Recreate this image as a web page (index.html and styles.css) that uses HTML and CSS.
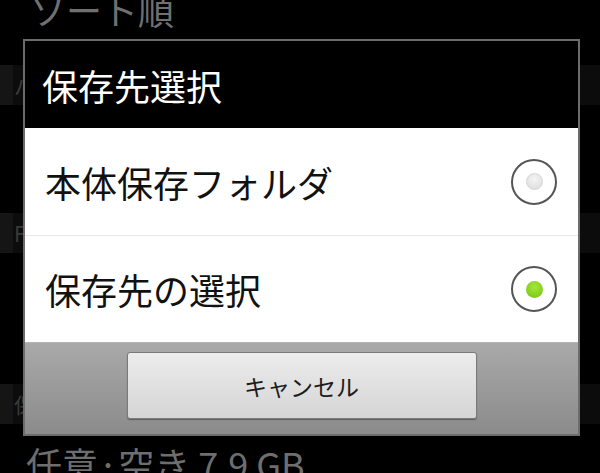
FILE: index.html
```html
<!DOCTYPE html>
<html lang="ja">
<head>
<meta charset="utf-8">
<title>保存先選択</title>
<link rel="stylesheet" href="styles.css">
</head>
<body>
<div class="screen">
  <div class="settings">
    <div class="setting-title">ソート順</div>
    <div class="band">パフォーマンス・スクロール</div>
    <div class="hidden-item item-a"></div>
    <div class="band">FTP設定</div>
    <div class="hidden-item item-b"></div>
    <div class="band">保存先</div>
    <div class="setting-value">任意·空き 7.9 GB</div>
  </div>

  <div class="dialog">
    <div class="dialog-title">保存先選択</div>
    <div class="options">
      <div class="option">
        <span class="option-label">本体保存フォルダ</span>
        <span class="radio"><span class="dot"></span></span>
      </div>
      <div class="option">
        <span class="option-label">保存先の選択</span>
        <span class="radio checked"><span class="dot"></span></span>
      </div>
    </div>
    <div class="button-bar">
      <button class="cancel">キャンセル</button>
    </div>
  </div>
</div>
</body>
</html>
```
FILE: styles.css
```css
html, body {
  margin: 0;
  padding: 0;
  background: #000;
}

body {
  font-family: "Noto Sans CJK JP", "Noto Sans", sans-serif;
}

.screen {
  position: relative;
  width: 600px;
  height: 473px;
  overflow: hidden;
  background: #000;
}

.settings {
  display: flex;
  flex-direction: column;
}

.setting-title {
  margin-top: -9px;
  height: 36px;
  line-height: 36px;
  font-size: 36px;
  color: #707070;
  padding-left: 30px;
  white-space: nowrap;
}

.band {
  margin-top: 38px;
  height: 40px;
  line-height: 40px;
  font-size: 21px;
  color: #3a3a3a;
  background: #0c0c0c;
  border-left: 13px solid #151515;
  padding-left: 1px;
  white-space: nowrap;
}

.hidden-item + .band {
  margin-top: 0;
}

.item-a { height: 108px; }
.item-b { height: 131px; }

.setting-value {
  margin-top: 21px;
  height: 36px;
  line-height: 36px;
  font-size: 36px;
  color: #6e6e6e;
  padding-left: 26px;
  white-space: nowrap;
}

.dialog {
  position: absolute;
  left: 23px;
  top: 39px;
  width: 553px;
  border: 2px solid #6c6c6c;
  display: flex;
  flex-direction: column;
  background: #000;
}

.dialog-title {
  height: 87px;
  display: flex;
  align-items: center;
  padding-left: 17px;
  font-size: 36px;
  color: #fff;
  background: #000;
}

.options {
  background: #fff;
  display: flex;
  flex-direction: column;
}

.option {
  display: flex;
  align-items: center;
  justify-content: space-between;
  height: 107px;
  padding: 0 21px 0 20px;
}

.option + .option {
  height: 106px;
  border-top: 1px solid #e8e8e8;
}

.option-label {
  font-size: 36px;
  color: #111;
  white-space: nowrap;
}

.radio {
  width: 42px;
  height: 42px;
  border: 2px solid #555;
  border-radius: 50%;
  display: flex;
  align-items: center;
  justify-content: center;
  background: #fff;
}

.dot {
  width: 15px;
  height: 15px;
  border-radius: 50%;
  background: radial-gradient(circle at 50% 35%, #f4f4f4 0%, #e2e2e2 70%, #d2d2d2 100%);
  border: 1px solid #d6d6d6;
}

.radio.checked .dot {
  width: 17px;
  height: 17px;
  border: none;
  background: radial-gradient(circle at 50% 35%, #a6e53c 0%, #86d21e 60%, #6fb912 100%);
}

.button-bar {
  height: 92px;
  box-sizing: border-box;
  background: linear-gradient(#a9a9a9, #8b8b8b);
  border-top: 1px solid #b4b4b4;
  display: flex;
  justify-content: center;
  padding-top: 9px;
}

.cancel {
  width: 350px;
  height: 67px;
  border: 1px solid #7a7a7a;
  border-radius: 3px;
  background: linear-gradient(#ececec, #d5d5d5);
  box-shadow: 0 1px 1px rgba(0, 0, 0, 0.35);
  font-family: "Noto Sans CJK JP", "Noto Sans", sans-serif;
  font-size: 23px;
  color: #1c1c1c;
  padding: 0;
  cursor: pointer;
}
```
